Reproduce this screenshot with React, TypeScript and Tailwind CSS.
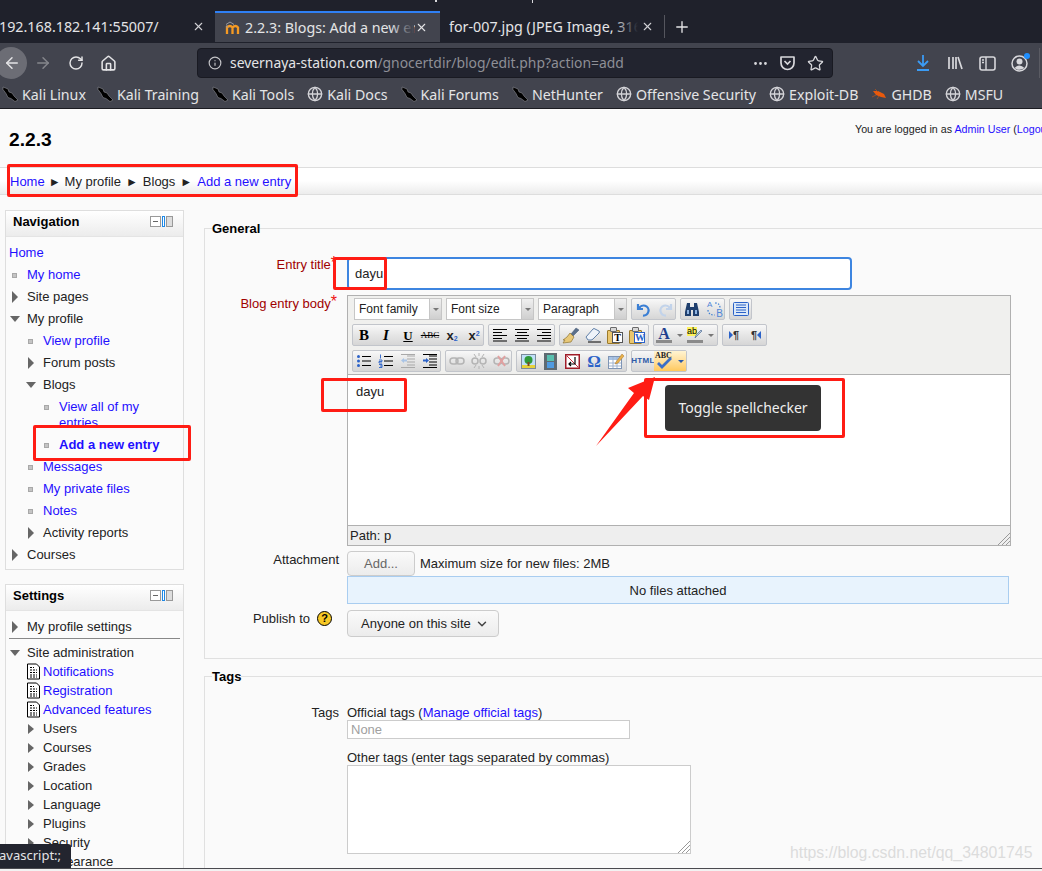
import { ArrowLeft, ArrowRight, ChevronDown, Ellipsis, Globe, House, Info, Plus, RotateCw, Star, X } from "lucide-react";
import type { ReactNode } from "react";

const BOOKMARKS = [
  { label: "Kali Linux", icon: "kali" },
  { label: "Kali Training", icon: "kali" },
  { label: "Kali Tools", icon: "kali" },
  { label: "Kali Docs", icon: "globe" },
  { label: "Kali Forums", icon: "kali" },
  { label: "NetHunter", icon: "kali" },
  { label: "Offensive Security", icon: "globe" },
  { label: "Exploit-DB", icon: "globe" },
  { label: "GHDB", icon: "bug" },
  { label: "MSFU", icon: "globe" },
];

function KaliIcon() {
  return (
    <svg width="16" height="16" viewBox="0 0 16 16" className="shrink-0">
      <path d="M1 1l5 2 1 3 3 1 2 3 4 4-3 1.500-4-3-3-1-2-4-3-4z" fill="#000" stroke="#9a9ba0" strokeWidth="0.5" />
    </svg>
  );
}

function BugIcon() {
  return (
    <svg width="16" height="16" viewBox="0 0 16 16" className="shrink-0">
      <path d="M2 5l5 0 6 3 2 4-5-1-5-2z" fill="#e8590c" />
      <path d="M1 11l4-2M6 13l2-3M4 3l3 3" stroke="#a8531f" strokeWidth="0.8" />
    </svg>
  );
}

function Tab({ children, active, fade, width }: { children: ReactNode; active?: boolean; fade?: string; width: string }) {
  return (
    <div className={`${width} relative flex h-full shrink-0 items-center ${active ? "bg-[#42444e] border-t-2 border-t-[#2f80f5]" : ""}`}>
      {children}
      {fade && <div className={`absolute right-[26px] top-0 h-full w-[24px] bg-gradient-to-r from-transparent ${fade}`} />}
    </div>
  );
}

function BrowserChrome() {
  return (
    <div className="font-['Noto_Sans',sans-serif] text-[#e4e4e6]">
      <div className="relative h-[43px] bg-[#1f212b] pt-[11px]">
        <span className="absolute left-[435px] top-0 h-[2px] w-[2px] bg-[#d8d8dc]" />
        <span className="absolute left-[532px] top-0 h-[3px] w-px bg-[#d8d8dc]" />
        <div className="flex h-[31px] items-stretch">
          <Tab width="w-[215px]">
            <span className="-ml-[1px] whitespace-nowrap text-[14.3px]">192.168.182.141:55007/</span>
            <X size={13} className="absolute right-[10px] text-[#d0d0d4]" />
          </Tab>
          <Tab width="w-[225px]" active fade="to-[#42444e]">
            <svg width="16" height="14" viewBox="0 0 16 14" className="ml-[10px] shrink-0">
              <path d="M2 13V5M2 6.500q3-3 5.500 0V13M7.500 6.500q3-3 5.500 0V13" fill="none" stroke="#f59a23" strokeWidth="2.300" />
              <path d="M1 3.500l4-2.500 4 2.500M2 4v3" fill="none" stroke="#9a9ba0" strokeWidth="1" />
            </svg>
            <span className="ml-[4px] w-[170px] overflow-hidden whitespace-nowrap text-[14.3px]">2.2.3: Blogs: Add a new entry</span>
            <X size={13} className="absolute right-[12px] text-[#e4e4e6]" />
          </Tab>
          <Tab width="w-[224px]" fade="to-[#1f212b]">
            <span className="ml-[9px] w-[189px] overflow-hidden whitespace-nowrap text-[14.3px]">for-007.jpg (JPEG Image, 316</span>
            <X size={13} className="absolute right-[10px] text-[#d0d0d4]" />
          </Tab>
          <div className="my-[4px] w-px bg-[#55565e]" />
          <div className="flex w-[34px] items-center justify-center">
            <Plus size={18} strokeWidth={1.8} />
          </div>
        </div>
      </div>

      <div className="flex h-[38px] items-center bg-[#42444e] pt-[2px]">
        <div className="-ml-[5px] flex h-[32px] w-[32px] shrink-0 items-center justify-center rounded-full bg-[#6c6d75]">
          <ArrowLeft size={18} className="ml-[1px]" />
        </div>
        <ArrowRight size={18} className="ml-[7px] shrink-0 text-[#85868c]" />
        <RotateCw size={16} strokeWidth={2.2} className="ml-[16px] shrink-0" />
        <House size={17} strokeWidth={2.2} className="ml-[16px] shrink-0" />
        <div className="ml-[80px] flex h-[30px] w-[636px] shrink-0 items-center rounded-[4px] border border-[#191a22] bg-[#22242f]">
          <Info size={14} className="ml-[10px] text-[#c4c4c8]" />
          <span className="ml-[8px] whitespace-nowrap text-[13.9px]">
            severnaya-station.com<span className="text-[#8e8f96]">/gnocertdir/blog/edit.php?action=add</span>
          </span>
          <Ellipsis size={17} className="ml-[128px] text-[#d8d8dc]" />
          <svg width="17" height="16" viewBox="0 0 17 16" className="ml-[10px]">
            <path d="M2 2h13v6a6.500 6.500 0 0 1-13 0z" fill="none" stroke="#d8d8dc" strokeWidth="1.7" strokeLinejoin="round" />
            <path d="M5.500 6l3 3 3-3" fill="none" stroke="#d8d8dc" strokeWidth="1.7" />
          </svg>
          <Star size={17} strokeWidth={1.8} className="ml-[11px] text-[#d8d8dc]" />
        </div>
        <svg width="16" height="18" viewBox="0 0 16 18" className="ml-[82px] shrink-0">
          <path d="M8 1v11M3 7l5 5 5-5M2 16h12" fill="none" stroke="#3b9cf5" strokeWidth="1.8" />
        </svg>
        <svg width="16" height="16" viewBox="0 0 16 16" className="ml-[16px] shrink-0">
          <path d="M2 2v12M6 2v12M9 2v12M11 2l4 12" fill="none" stroke="#d8d8dc" strokeWidth="1.7" />
        </svg>
        <svg width="17" height="15" viewBox="0 0 17 15" className="ml-[16px] shrink-0">
          <rect x="1" y="1" width="15" height="13" rx="2" fill="none" stroke="#d8d8dc" strokeWidth="1.6" />
          <path d="M7 1v13M3 4h2M3 6.500h2" stroke="#d8d8dc" strokeWidth="1.4" />
        </svg>
        <span className="relative ml-[15px] block h-[17px] w-[17px] shrink-0">
          <svg width="17" height="17" viewBox="0 0 17 17">
            <circle cx="8.500" cy="8.500" r="7.500" fill="none" stroke="#d8d8dc" strokeWidth="1.500" />
            <circle cx="8.500" cy="6.500" r="3" fill="#d8d8dc" />
            <path d="M3.500 13q5-5 10 0q-5 3.500-10 0z" fill="#d8d8dc" />
          </svg>
          <span className="absolute -right-[2px] -top-[2px] h-[6px] w-[6px] rounded-full bg-[#1f8fff]" />
        </span>
        <div className="ml-[11px] h-[30px] w-px shrink-0 bg-[#5a5b63]" />
      </div>

      <div className="flex h-[28px] items-center gap-[13px] border-b border-[#1b1c22] bg-[#42444e] pl-[2px]">
        {BOOKMARKS.map((b) => (
          <div key={b.label} className="flex shrink-0 items-center gap-[4px] whitespace-nowrap text-[14.2px] first:-mr-[2px]">
            {b.icon === "kali" && <KaliIcon />}
            {b.icon === "globe" && <Globe size={16} className="text-[#d4d4d8]" />}
            {b.icon === "bug" && <BugIcon />}
            {b.label}
          </div>
        ))}
      </div>
    </div>
  );
}

function Triangle({ open, small }: { open?: boolean; small?: boolean }) {
  if (open) return <span className="block h-0 w-0 border-x-[5.500px] border-t-[6px] border-x-transparent border-t-[#666]" />;
  return <span className={`block h-0 w-0 border-l-[6px] border-l-[#666] border-y-transparent ${small ? "border-y-[5.500px]" : "border-y-[6px]"}`} />;
}

function Bullet() {
  return <span className="block h-[5px] w-[5px] border border-[#a8a8a8] bg-[#c4c4c4]" />;
}

function DocIcon() {
  return (
    <svg width="15" height="17" viewBox="0 0 15 17" className="shrink-0">
      <path d="M1.500 1h9l3 3v12h-12z" fill="#fff" stroke="#000" strokeWidth="1" />
      <path d="M4 4.500h4M4 7h7M4 9.500h7M4 12h7M4 14h7" stroke="#000" strokeWidth="1" strokeDasharray="2 1" />
    </svg>
  );
}

type NavItem = { text: string; depth: number; kind: "none" | "bullet" | "closed" | "open"; link?: boolean; bold?: boolean };

const NAV: NavItem[] = [
  { text: "Home", depth: 0, kind: "none", link: true },
  { text: "My home", depth: 0, kind: "bullet", link: true },
  { text: "Site pages", depth: 0, kind: "closed" },
  { text: "My profile", depth: 0, kind: "open" },
  { text: "View profile", depth: 1, kind: "bullet", link: true },
  { text: "Forum posts", depth: 1, kind: "closed" },
  { text: "Blogs", depth: 1, kind: "open" },
  { text: "View all of my entries", depth: 2, kind: "bullet", link: true },
  { text: "Add a new entry", depth: 2, kind: "bullet", link: true, bold: true },
  { text: "Messages", depth: 1, kind: "bullet", link: true },
  { text: "My private files", depth: 1, kind: "bullet", link: true },
  { text: "Notes", depth: 1, kind: "bullet", link: true },
  { text: "Activity reports", depth: 1, kind: "closed" },
  { text: "Courses", depth: 0, kind: "closed" },
];

const ADMIN_LEAVES = ["Notifications", "Registration", "Advanced features"];
const ADMIN_BRANCHES = ["Users", "Courses", "Grades", "Location", "Language", "Plugins", "Security", "Appearance"];

function BlockHeader({ title }: { title: string }) {
  return (
    <div className="flex h-[26px] items-center justify-between border-b border-[#e4e4e4] bg-gradient-to-b from-white to-[#ececec] pb-[4px] pl-[7px] pr-[10px]">
      <span className="text-[13px] font-bold text-black">{title}</span>
      <span className="flex items-center gap-[1px]">
        <span className="flex h-[11px] w-[11px] items-center justify-center border border-[#999] bg-white">
          <span className="block h-px w-[5px] bg-[#666]" />
        </span>
        <span className="h-[11px] w-[3px] border border-[#1e88e5] bg-white" />
        <span className="h-[11px] w-[7px] border border-[#999] bg-[#ddd]" />
      </span>
    </div>
  );
}

function IconCol({ children }: { children?: ReactNode }) {
  return (
    <span className="flex h-[16px] w-[18px] shrink-0">
      <span className="flex w-[11px] items-center justify-center">{children}</span>
    </span>
  );
}

function Sidebar() {
  return (
    <div className="ml-[5px] w-[179px] shrink-0 pt-[15px] text-[13px] text-[#222]">
      <div className="h-[360px] border border-[#dedede] bg-[#fbfbfb]">
        <BlockHeader title="Navigation" />
        <ul className="pl-[3px] pt-[5px]">
          {NAV.map((n) => (
            <li key={n.text} className="flex py-[3px] leading-[16px]" style={{ paddingLeft: n.depth * 16 }}>
              {n.kind !== "none" && (
                <IconCol>
                  {n.kind === "bullet" && <Bullet />}
                  {n.kind === "closed" && <Triangle />}
                  {n.kind === "open" && <Triangle open />}
                </IconCol>
              )}
              <span className={`${n.link ? "text-[#1f0fff]" : ""} ${n.bold ? "font-bold" : ""} ${n.depth === 2 ? "w-[110px]" : ""}`}>{n.text}</span>
            </li>
          ))}
        </ul>
      </div>

      <div className="mt-[14px] h-[300px] border border-[#dedede] bg-[#fbfbfb]">
        <BlockHeader title="Settings" />
        <div className="mx-[3px] mt-[5px] flex h-[23px] items-center border-b border-[#888]">
          <IconCol><Triangle /></IconCol>
          <span>My profile settings</span>
        </div>
        <div className="mx-[3px] mt-[4px] flex h-[19px] items-center">
          <IconCol><Triangle open /></IconCol>
          <span>Site administration</span>
        </div>
        {ADMIN_LEAVES.map((t) => (
          <div key={t} className="flex h-[19px] items-center pl-[20px]">
            <DocIcon />
            <span className="ml-[2px] text-[#1f0fff]">{t}</span>
          </div>
        ))}
        {ADMIN_BRANCHES.map((t) => (
          <div key={t} className="flex h-[19px] items-center pl-[22px]">
            <Triangle small />
            <span className="ml-[9px]">{t}</span>
          </div>
        ))}
      </div>
    </div>
  );
}

function Group({ w, children }: { w: string; children: ReactNode }) {
  return (
    <div className={`${w} flex h-[22px] shrink-0 items-center rounded-[2px] border border-[#c2c5cb] bg-gradient-to-b from-[#f8f8f8] via-[#e6e6e6] to-[#d6d6d6]`}>
      {children}
    </div>
  );
}

function Btn({ children, w = "w-[22px]", hot }: { children?: ReactNode; w?: string; hot?: boolean }) {
  return (
    <span className={`${w} flex h-full shrink-0 items-center justify-center ${hot ? "bg-gradient-to-b from-[#fff4d2] to-[#ffc95c]" : ""}`}>
      {children}
    </span>
  );
}

function Select({ label, w }: { label: string; w: string }) {
  return (
    <div className={`${w} flex h-[22px] shrink-0 items-stretch border border-[#c6c6c6] text-[12px] text-[#222]`}>
      <span className="flex-1 bg-white pl-[4px] leading-[20px]">{label}</span>
      <span className="flex w-[12px] items-center justify-center border-l border-[#c6c6c6] bg-gradient-to-b from-[#f0f0f0] to-[#cfcfcf]">
        <span className="block h-0 w-0 border-x-[3px] border-t-[3px] border-x-transparent border-t-[#777]" />
      </span>
    </div>
  );
}

function Arrow() {
  return <span className="block h-0 w-0 border-x-[3px] border-t-[3px] border-x-transparent border-t-[#777]" />;
}

function Lines({ kind, faded }: { kind: "left" | "center" | "right" | "ul" | "ol" | "out" | "in"; faded?: boolean }) {
  const c = faded ? "#a9a9a9" : "#000";
  const blue = faded ? "#a9c4e6" : "#2b62c8";
  return (
    <svg width="16" height="14" viewBox="0 0 16 14">
      {kind === "left" && <path d="M1 1.500h14M1 4.500h9M1 7.500h14M1 10.500h9M1 13h14" stroke={c} />}
      {kind === "center" && <path d="M1 1.500h14M3 4.500h10M1 7.500h14M3 10.500h10M1 13h14" stroke={c} />}
      {kind === "right" && <path d="M1 1.500h14M6 4.500h9M1 7.500h14M6 10.500h9M1 13h14" stroke={c} />}
      {kind === "ul" && (
        <>
          <path d="M6 2.500h9M6 7h9M6 11.500h9" stroke={c} />
          <circle cx="2.500" cy="2.500" r="1.500" fill={blue} />
          <circle cx="2.500" cy="7" r="1.500" fill={blue} />
          <circle cx="2.500" cy="11.500" r="1.500" fill={blue} />
        </>
      )}
      {kind === "ol" && (
        <>
          <path d="M6 2.500h9M6 7h9M6 11.500h9" stroke={c} />
          <path d="M2.500 0.500v4M1 6h3v1.500H1V9h3M1 10.500h3v3H1M2 12h2" stroke={blue} strokeWidth="0.9" fill="none" />
        </>
      )}
      {(kind === "out" || kind === "in") && (
        <>
          <path d="M7 2h8M7 5h8M7 8h8M7 11h8M1 13.500h14M1 .5h14" stroke={c} />
          {kind === "in" ? <path d="M1 5.500h3V4l3 2.500L4 9V7.500H1z" fill={blue} /> : <path d="M7 5.500H4V4L1 6.500 4 9V7.500h3z" fill={blue} />}
        </>
      )}
    </svg>
  );
}

function Clipboard({ letter, color }: { letter: string; color: string }) {
  return (
    <span className="relative block h-[17px] w-[16px]">
      <span className="absolute bottom-0 left-0 h-[14px] w-[13px] rounded-[1px] border border-[#9c7a2a] bg-[#eac66e]" />
      <span className="absolute left-[3px] top-0 h-[5px] w-[7px] rounded-[1px] border border-[#6a6a6a] bg-[#d8d8d8]" />
      <span className={`absolute bottom-[1px] right-0 block h-[11px] w-[11px] border bg-white text-center font-['Liberation_Serif',serif] text-[10px] font-bold leading-[10px] ${color}`}>{letter}</span>
    </span>
  );
}

function Toolbar() {
  const linkStroke = "#b4b4b4";
  return (
    <div className="flex h-[79px] flex-col gap-[4px] border-b border-[#b0b0b0] bg-[#f0f0ee] pt-[2px]">
      <div className="flex gap-[4px] pl-[6px]">
        <Select label="Font family" w="w-[88px]" />
        <Select label="Font size" w="w-[88px]" />
        <Select label="Paragraph" w="w-[89px]" />
        <Group w="w-[45px]">
          <Btn>
            <svg width="15" height="15" viewBox="0 0 15 15"><path d="M2 2v5h5M3 6.500a5 5 0 1 1 4 7" fill="none" stroke="#3b7fd4" strokeWidth="2.200" /></svg>
          </Btn>
          <Btn>
            <svg width="15" height="15" viewBox="0 0 15 15"><path d="M13 2v5H8M12 6.500a5 5 0 1 0-4 7" fill="none" stroke="#c2d3ea" strokeWidth="2.200" /></svg>
          </Btn>
        </Group>
        <Group w="w-[45px]">
          <Btn>
            <svg width="16" height="15" viewBox="0 0 16 15">
              <path d="M3 1h3v4h4V1h3l2 9v4H9V8H7v6H1v-4z" fill="#1f3f6e" />
              <path d="M3 8h2v4H3zM11 8h2v4h-2z" fill="#8fb3e0" />
            </svg>
          </Btn>
          <Btn>
            <span className="relative block h-[17px] w-[18px] font-['Liberation_Sans',sans-serif] text-[8px] leading-[8px] text-[#4f86d8]">
              <span className="absolute left-[2px] top-0">A</span>
              <span className="absolute bottom-0 right-0 text-[10px]">B</span>
              <svg width="18" height="17" viewBox="0 0 18 17" className="absolute inset-0">
                <path d="M10 2q5 0 5 5M3 9q0 5 7 5" fill="none" stroke="#3b7fd4" strokeWidth="1.200" strokeDasharray="1.500 1.500" />
              </svg>
            </span>
          </Btn>
        </Group>
        <Group w="w-[23px]">
          <Btn>
            <svg width="16" height="14" viewBox="0 0 16 14">
              <rect x="0.500" y="0.500" width="15" height="13" rx="1" fill="#dbe8f8" stroke="#2b62c8" />
              <path d="M3 3h10M3 5.500h10M3 8h10M3 10.500h10" stroke="#2b62c8" />
            </svg>
          </Btn>
        </Group>
      </div>

      <div className="flex gap-[4px] pl-[4px]">
        <Group w="w-[132px]">
          <Btn><span className="font-['Liberation_Serif',serif] text-[15px] font-bold leading-none text-black">B</span></Btn>
          <Btn><span className="font-['Liberation_Serif',serif] text-[15px] font-bold italic leading-none text-black">I</span></Btn>
          <Btn><span className="font-['Liberation_Serif',serif] text-[13px] font-bold leading-none text-black underline">U</span></Btn>
          <Btn><span className="font-['Liberation_Serif',serif] text-[9px] leading-none text-black line-through">ABC</span></Btn>
          <Btn><span className="font-['Liberation_Sans',sans-serif] text-[13px] font-bold leading-none text-[#222]">x<sub className="text-[7px] text-[#2b62c8]">2</sub></span></Btn>
          <Btn><span className="font-['Liberation_Sans',sans-serif] text-[13px] font-bold leading-none text-[#222]">x<sup className="text-[7px] text-[#2b62c8]">2</sup></span></Btn>
        </Group>
        <Group w="w-[67px]">
          <Btn><Lines kind="left" /></Btn>
          <Btn><Lines kind="center" /></Btn>
          <Btn><Lines kind="right" /></Btn>
        </Group>
        <Group w="w-[90px]">
          <Btn>
            <svg width="18" height="17" viewBox="0 0 18 17">
              <path d="M14 1l3 2-6 6-2-2z" fill="#5b6f8a" stroke="#3f5472" strokeWidth="0.500" />
              <path d="M8 6l4 4-3 5-8 1 2-3-2 0 4-3z" fill="#e8c878" stroke="#8f7430" strokeWidth="0.700" />
            </svg>
          </Btn>
          <Btn>
            <svg width="17" height="16" viewBox="0 0 17 16">
              <path d="M1 10l7-8q1-1 2 0l4 2q1 1 0 2l-6 6q-1 1-2 1H3z" fill="#eef3fa" stroke="#5f7fa8" />
              <path d="M3 15h13" stroke="#000" />
            </svg>
          </Btn>
          <Btn><Clipboard letter="T" color="border-[#555] text-black" /></Btn>
          <Btn><Clipboard letter="W" color="border-[#2b62c8] text-[#2b62c8]" /></Btn>
        </Group>
        <Group w="w-[65px]">
          <Btn w="w-[20px]">
            <span className="flex flex-col items-center">
              <span className="font-['Liberation_Serif',serif] text-[16px] font-bold leading-[13px] text-[#1f3f8e]">A</span>
              <span className="block h-[3px] w-[16px] bg-[#8a8a8a]" />
            </span>
          </Btn>
          <Btn w="w-[11px]"><Arrow /></Btn>
          <Btn w="w-[20px]">
            <span className="flex flex-col items-center">
              <span className="relative h-[13px] w-[16px]">
                <span className="absolute left-0 top-0 h-[9px] w-[10px] bg-[#fdf25a] font-['Liberation_Sans',sans-serif] text-[9px] leading-[9px] text-black">ab</span>
                <svg width="16" height="13" viewBox="0 0 16 13" className="absolute inset-0">
                  <path d="M8 11l1-3 5-5 1 1-5 5z" fill="#b7c6da" stroke="#4f6f98" strokeWidth="0.700" />
                </svg>
              </span>
              <span className="block h-[3px] w-[16px] bg-[#8a8a8a]" />
            </span>
          </Btn>
          <Btn w="w-[11px]"><Arrow /></Btn>
        </Group>
        <Group w="w-[45px]">
          <Btn>
            <span className="flex items-center font-['Liberation_Sans',sans-serif] text-[11px] font-bold leading-none text-[#333]">
              <span className="block h-0 w-0 border-y-[4px] border-l-[4px] border-y-transparent border-l-[#2b62c8]" />¶
            </span>
          </Btn>
          <Btn>
            <span className="flex items-center font-['Liberation_Sans',sans-serif] text-[11px] font-bold leading-none text-[#333]">
              ¶<span className="block h-0 w-0 border-y-[4px] border-r-[4px] border-y-transparent border-r-[#2b62c8]" />
            </span>
          </Btn>
        </Group>
      </div>

      <div className="flex gap-[4px] pl-[4px]">
        <Group w="w-[89px]">
          <Btn><Lines kind="ul" /></Btn>
          <Btn><Lines kind="ol" /></Btn>
          <Btn><Lines kind="out" faded /></Btn>
          <Btn><Lines kind="in" /></Btn>
        </Group>
        <Group w="w-[67px]">
          <Btn>
            <svg width="16" height="10" viewBox="0 0 16 10"><rect x="1" y="2" width="8" height="6" rx="3" fill="none" stroke={linkStroke} strokeWidth="1.500" /><rect x="7" y="2" width="8" height="6" rx="3" fill="none" stroke={linkStroke} strokeWidth="1.500" /></svg>
          </Btn>
          <Btn>
            <svg width="16" height="16" viewBox="0 0 16 16"><rect x="1" y="5" width="6" height="6" rx="3" fill="none" stroke={linkStroke} strokeWidth="1.500" /><rect x="9" y="5" width="6" height="6" rx="3" fill="none" stroke={linkStroke} strokeWidth="1.500" /><path d="M8 0v3M8 13v3M3 1l2 3M13 1l-2 3M3 15l2-3M13 15l-2-3" stroke={linkStroke} /></svg>
          </Btn>
          <Btn>
            <svg width="17" height="12" viewBox="0 0 17 12"><rect x="1" y="3" width="8" height="6" rx="3" fill="none" stroke={linkStroke} strokeWidth="1.500" /><rect x="8" y="3" width="8" height="6" rx="3" fill="none" stroke={linkStroke} strokeWidth="1.500" /><path d="M5 1l7 10M12 1L5 11" stroke="#e0a0a0" strokeWidth="2" /></svg>
          </Btn>
        </Group>
        <Group w="w-[111px]">
          <Btn>
            <svg width="15" height="15" viewBox="0 0 15 15">
              <rect x="0.500" y="0.500" width="14" height="14" fill="#bfe0f8" stroke="#7a8a9a" />
              <rect x="1" y="11" width="13" height="3" fill="#e6d23a" />
              <circle cx="7.500" cy="6" r="4" fill="#2f9a3a" />
              <rect x="6.500" y="8" width="2" height="4" fill="#7a4a20" />
            </svg>
          </Btn>
          <Btn>
            <svg width="13" height="17" viewBox="0 0 13 17">
              <rect x="0" y="0" width="13" height="17" fill="#5e6a72" />
              <rect x="3" y="2" width="7" height="6" fill="#58c0b0" />
              <rect x="3" y="9" width="7" height="6" fill="#4f9ae0" />
            </svg>
          </Btn>
          <Btn>
            <svg width="15" height="15" viewBox="0 0 15 15">
              <rect x="0.750" y="0.750" width="13.500" height="13.500" fill="#fff" stroke="#a01c28" strokeWidth="1.500" />
              <path d="M2 2l11 11" stroke="#c83040" />
              <path d="M10 3v7H4M6 8l-2 2 2 2" fill="none" stroke="#000" strokeWidth="1.200" />
            </svg>
          </Btn>
          <Btn><span className="font-['Liberation_Serif',serif] text-[17px] font-bold leading-none text-[#2b62c8]">Ω</span></Btn>
          <Btn>
            <svg width="17" height="16" viewBox="0 0 17 16">
              <rect x="0.500" y="3.500" width="13" height="12" fill="#fff" stroke="#7f95b5" />
              <rect x="1" y="4" width="12" height="3" fill="#a9c4e6" />
              <path d="M1 10h12M1 13h12M5 4v11M9 4v11" stroke="#9fb3cf" />
              <path d="M8 9l6-8 2 2-6 7-3 1z" fill="#e8b04a" stroke="#a8752a" strokeWidth="0.500" />
            </svg>
          </Btn>
        </Group>
        <Group w="w-[56px]">
          <Btn><span className="font-['Liberation_Sans',sans-serif] text-[8px] font-bold leading-none tracking-[0.3px] text-[#2b5aa8]">HTML</span></Btn>
          <Btn w="w-[22px]" hot>
            <span className="relative block h-[18px] w-[20px]">
              <span className="absolute left-0 top-0 font-['Liberation_Serif',serif] text-[8px] font-bold leading-[8px] text-[#222]">ABC</span>
              <svg width="20" height="18" viewBox="0 0 20 18" className="absolute inset-0">
                <path d="M3 11l4 4 9-9" fill="none" stroke="#3b6fc8" strokeWidth="2.800" />
              </svg>
            </span>
          </Btn>
          <Btn w="w-[10px]" hot><span className="block h-0 w-0 border-x-[3px] border-t-[3px] border-x-transparent border-t-[#2b5aa8]" /></Btn>
        </Group>
      </div>
    </div>
  );
}

function ResizeGrip() {
  return (
    <svg width="12" height="12" viewBox="0 0 12 12" className="absolute bottom-0 right-0">
      <path d="M12 0L0 12M12 4L4 12M12 8L8 12" stroke="#999" strokeWidth="1" />
    </svg>
  );
}

function Field({ label, req, help, lower, children, className = "" }: { label?: string; req?: boolean; help?: boolean; lower?: boolean; children: ReactNode; className?: string }) {
  return (
    <div className={`flex ${className}`}>
      <div className={`flex w-[134px] shrink-0 justify-end ${lower ? "pt-[1px]" : ""} ${req ? "text-[#a00000]" : ""}`}>
        {help ? (
          <span className="mr-[7px] flex h-[15px] items-center gap-[7px]">
            {label}
            <span className="flex h-[15px] w-[15px] items-center justify-center rounded-full border border-black bg-[#f7c825] text-[11px] font-bold leading-none text-black">?</span>
          </span>
        ) : (
          <span className="leading-[15px]">
            {label}
            {req && <span className="pr-[2px] align-top text-[16px] leading-[12px] text-[#ee1111]">*</span>}
          </span>
        )}
      </div>
      <div className="ml-[8px]">{children}</div>
    </div>
  );
}

function Main() {
  return (
    <div className="ml-[20px] w-[900px] shrink-0 pt-[26px] text-[13px] text-[#222]">
      <fieldset className="h-[438px] border border-[#e0e0e0]">
        <legend className="ml-[7px] font-bold leading-[15px] text-black">General</legend>
        <Field label="Entry title" req className="mt-[21px]">
          <div className="flex h-[33px] w-[505px] items-center rounded-[4px] border-2 border-[#3d85e0] bg-white pl-[6px]">dayu</div>
        </Field>
        <Field label="Blog entry body" req lower className="mt-[5px]">
          <div className="relative w-[664px] border border-[#b0b0b0] bg-white">
            <Toolbar />
            <div className="h-[151px] border-b border-[#b0b0b0] pl-[8px] pt-[9px] leading-[16px]">dayu</div>
            <div className="h-[19px] bg-[#eeeeee] pl-[2px] leading-[19px]">Path: p</div>
            <ResizeGrip />
          </div>
        </Field>
        <Field label="Attachment" lower className="mt-[5px]">
          <div className="flex items-center">
            <div className="flex h-[25px] w-[68px] items-center justify-center rounded-[4px] border border-[#ccc] bg-gradient-to-b from-[#fafafa] to-[#ececec] text-[#666]">Add...</div>
            <span className="ml-[5px]">Maximum size for new files: 2MB</span>
          </div>
          <div className="flex h-[28px] w-[662px] items-center justify-center border border-[#a9cdf0] bg-[#e8f3fd] pt-[1px]">No files attached</div>
        </Field>
        <Field label="Publish to" help lower className="mt-[6px]">
          <div className="flex h-[27px] w-[152px] items-center rounded-[4px] border border-[#ccc] bg-gradient-to-b from-[#fafafa] to-[#ececec] pl-[13px]">
            Anyone on this site
            <ChevronDown size={14} strokeWidth={2.500} className="ml-[4px] text-[#444]" />
          </div>
        </Field>
      </fieldset>

      <fieldset className="mt-[10px] h-[300px] border border-[#e0e0e0]">
        <legend className="ml-[7px] font-bold leading-[15px] text-black">Tags</legend>
        <Field label="Tags" className="mt-[21px]">
          <div className="leading-[15px]">
            Official tags (<span className="text-[#1f0fff]">Manage official tags</span>)
          </div>
          <div className="h-[19px] w-[283px] border border-[#ccc] bg-white pl-[3px] leading-[17px] text-[#a0a0a0]">None</div>
          <div className="mt-[11px] leading-[15px]">Other tags (enter tags separated by commas)</div>
          <div className="relative h-[89px] w-[344px] border border-[#ccc] bg-white">
            <ResizeGrip />
          </div>
        </Field>
      </fieldset>
    </div>
  );
}

function Annotations() {
  const box = "absolute rounded-[2px] border-[3px] border-[#ff1c14]";
  return (
    <>
      <div className={`${box} left-[7px] top-[164px] h-[33px] w-[291px]`} />
      <div className={`${box} left-[33px] top-[425px] h-[36px] w-[158px]`} />
      <div className={`${box} left-[333px] top-[257px] h-[33px] w-[54px]`} />
      <div className={`${box} left-[321px] top-[378px] h-[34px] w-[86px]`} />
      <div className={`${box} left-[644px] top-[378px] h-[60px] w-[201px]`} />
      <svg width="70" height="80" viewBox="0 0 70 80" className="absolute left-[590px] top-[372px]">
        <path d="M6 74L44 21l-6-5L65 5 59 28l-6-4z" fill="#ff1c14" />
      </svg>
      <div className="absolute left-[665px] top-[385px] flex h-[46px] w-[156px] items-center justify-center rounded-[4px] bg-[#333] pb-[1px] font-['Noto_Sans',sans-serif] text-[14px] text-[#eee]">
        Toggle spellchecker
      </div>
    </>
  );
}

export default function App() {
  return (
    <div className="relative h-[871px] w-[1042px] overflow-hidden bg-[#fafafa] font-['Liberation_Sans',sans-serif]">
      <BrowserChrome />
      <div className="h-[759px] overflow-hidden">
        <div className="relative h-[58px]">
          <h1 className="pl-[9px] pt-[21px] text-[19.200px] font-bold leading-[20px] text-black">2.2.3</h1>
          <div className="absolute left-[855px] top-[14px] whitespace-nowrap text-[10.700px] leading-[13px] text-[#222]">
            You are logged in as <span className="text-[#1f0fff]">Admin User</span> (<span className="text-[#1f0fff]">Logout</span>)
          </div>
        </div>
        <div className="flex h-[28px] items-center border-y border-[#dddddd] bg-gradient-to-b from-white via-white to-[#ececec] pl-[10px] pt-[1px] text-[13px] text-[#222]">
          <span className="text-[#1f0fff]">Home</span>
          <span className="mx-[4px] text-[12px]">►</span>
          <span>My profile</span>
          <span className="mx-[5px] text-[12px]">►</span>
          <span>Blogs</span>
          <span className="mx-[5px] text-[12px]">►</span>
          <span className="text-[#1f0fff]">Add a new entry</span>
        </div>
        <div className="flex">
          <Sidebar />
          <Main />
        </div>
      </div>
      <div className="h-[3px] border-t border-[#4a4a4f] bg-[#f2f2f2]" />
      <Annotations />
      <div className="absolute bottom-[3px] left-0 flex h-[24px] w-[71px] items-center overflow-hidden rounded-tr-[3px] bg-[#23252f] font-['Noto_Sans',sans-serif] text-[13px] text-[#e4e4e6]">
        <span className="-ml-[1px] whitespace-nowrap">avascript:;</span>
      </div>
      <div className="absolute left-[790px] top-[842px] whitespace-nowrap text-[15.800px] leading-[22px] text-[#dcdcdc]">https://blog.csdn.net/qq_34801745</div>
    </div>
  );
}
